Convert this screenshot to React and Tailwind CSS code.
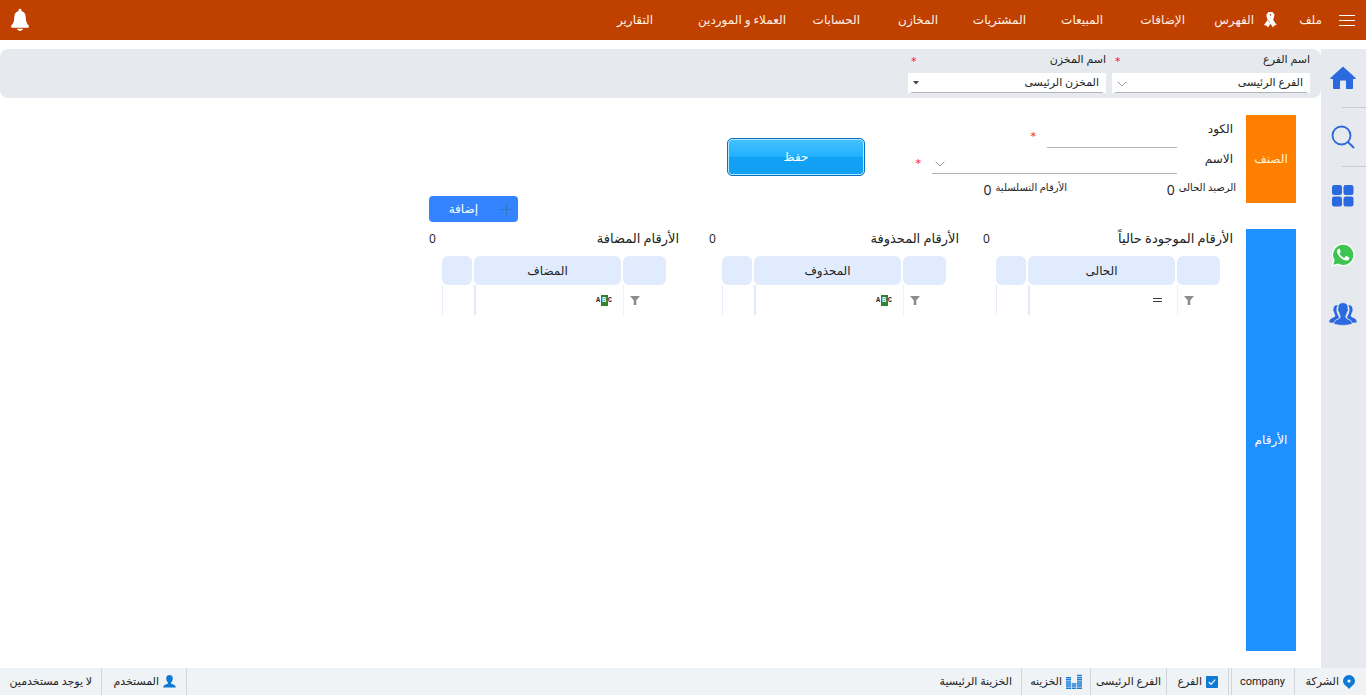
import React from "react";

const MENU = [
  { text: "الفهرس", width: "w-[69px]" },
  { text: "الإضافات", width: "w-[82px]" },
  { text: "المبيعات", width: "w-[77px]" },
  { text: "المشتريات", width: "w-[88px]" },
  { text: "المخازن", width: "w-[78px]" },
  { text: "الحسابات", width: "w-[74px]" },
  { text: "العملاء و الموردين", width: "w-[133px]" },
  { text: "التقارير", width: "w-[60px]" },
];

function BellIcon() {
  return (
    <svg viewBox="0 0 20 24" className="h-6 w-5" fill="#fff" aria-hidden="true">
      <circle cx="10" cy="2.200" r="1.400" />
      <path d="M10 3c-3.800 0-5.500 2.600-5.700 6-.3 4.600-.8 6.300-3.100 8.600v1.200c0 .6.400.9 1 1h15.600c.6-.1 1-.4 1-1v-1.200c-2.300-2.300-2.800-4-3.100-8.600C15.500 5.600 13.800 3 10 3z" />
      <path d="M7 20.800h6c-.5 1.400-1.500 2-3 2s-2.500-.6-3-2z" />
    </svg>
  );
}

function RibbonIcon() {
  return (
    <svg viewBox="0 0 14 16" className="h-4 w-[14px]" aria-hidden="true">
      <path d="M3.500 2.500L5.500 0h4l2 2.500-1 4.500L5 15.500 3.700 13.800 1 13l5.300-7.500z" fill="#fff" />
      <path d="M3.500 2.500c-.2 2 .5 4 1.500 5.500l5 7.500 1.200-2 2.500-.5L8.500 5.500z" fill="#fff" />
      <path d="M6.400 2.800L7.300 2 8.200 2.800 7.400 4z" fill="#c04000" />
      <path d="M5.300 8.500l1.500 2.200" stroke="#c04000" strokeWidth=".6" />
    </svg>
  );
}

function HomeIcon() {
  return (
    <svg viewBox="0 0 26 24" className="h-6 w-[26px]" fill="#2a69de" aria-hidden="true">
      <path d="M13 .5L.6 11.800c-.6.600-.3 1.300.5 1.300H3V22c0 .6.400 1 1 1h6v-7.500c0-.7.400-1.100 1.100-1.100h3.800c.7 0 1.100.4 1.100 1.100V23h6c.6 0 1-.4 1-1v-8.900h1.900c.8 0 1.100-.7.500-1.300z" />
    </svg>
  );
}

function SearchIcon() {
  return (
    <svg viewBox="0 0 24 24" className="size-6" fill="none" stroke="#2f6bd8" strokeWidth="1.900" aria-hidden="true">
      <circle cx="10.500" cy="10.500" r="9" />
      <path d="M17 17l6 6" />
    </svg>
  );
}

function GridIcon() {
  return (
    <svg viewBox="0 0 22 22" className="size-[22px]" fill="#2a69de" aria-hidden="true">
      <rect x="0" y="0" width="10" height="10" rx="2.200" />
      <rect x="11.500" y="0" width="10" height="10" rx="2.200" />
      <rect x="0" y="11.500" width="10" height="10" rx="2.200" />
      <rect x="11.500" y="11.500" width="10" height="10" rx="2.200" />
    </svg>
  );
}

function ChatIcon() {
  return (
    <svg viewBox="0 0 24 24" className="size-6" aria-hidden="true">
      <path d="M12.200.3a11.300 11.300 0 0 0-10 16.700L.4 23.700l6.800-1.800A11.400 11.400 0 1 0 12.200.3z" fill="#fff" />
      <path d="M12.200 1.700a10.100 10.100 0 0 0-8.600 15.400L2.400 21.700l4.700-1.200A10.100 10.100 0 1 0 12.200 1.700z" fill="#3fc351" />
      <path d="M8.900 6.300c-.3-.5-.6-.5-.9-.5-.8 0-2 1-2 2.800 0 1.800 1.300 3.500 2.400 4.800 1.400 1.700 3.300 3.200 5.600 3.900 2 .6 3.900-.1 4.200-1.600.2-.9.100-1.200-.2-1.400l-2.500-1.200c-.4-.2-.6-.1-.9.300l-1 1.200c-.3.3-.5.300-.9.100-1.800-.8-3.100-2-4-3.600-.2-.4-.1-.6.100-.9l.7-.9c.2-.3.200-.5.100-.8z" fill="#fff" />
    </svg>
  );
}

function PeopleIcon() {
  return (
    <svg viewBox="0 0 28 24" className="h-6 w-7" fill="#2a69de" aria-hidden="true">
      <path d="M8.200 3.200C5.500 3 4.300 5 4.500 7.500c-.6.700 0 2 .6 2.600.2 1.800.9 2.600 1.100 3.500.2 1.300-1.200 1.800-3 2.500C1.200 17 .4 18.200.2 20.200c1.500.4 3 .5 4.600.5.500-2.500 3.200-3.300 4.700-4.200.7-.5.500-1.600 0-2.400C8.300 12 7.300 9.500 7.500 7c.1-1.500.5-2.800 1.400-3.700z" />
      <path d="M19.800 3.200c2.700-.2 3.900 1.800 3.700 4.300.6.700 0 2-.6 2.600-.2 1.800-.9 2.600-1.100 3.500-.2 1.300 1.200 1.800 3 2.500 2 .9 2.800 2.100 3 4.100-1.500.4-3 .5-4.600.5-.5-2.500-3.200-3.300-4.700-4.200-.7-.5-.5-1.600 0-2.400 1.200-2.100 2.200-4.600 2-7.100-.1-1.500-.5-2.800-1.400-3.700z" />
      <path d="M14 .7c-3.700 0-5.300 2.600-4.900 6-.8.500-.3 2.400.6 3.200.4 2 1.200 3 1.500 4.200.4 2-1.300 2.700-3.300 3.500-1.900.8-2.900 2-3.100 4.500 2.900.9 6 1.300 9.200 1.300s6.300-.4 9.200-1.300c-.2-2.500-1.200-3.700-3.100-4.500-2-.8-3.700-1.500-3.300-3.500.3-1.200 1.100-2.200 1.500-4.200.9-.8 1.400-2.700.6-3.200.4-3.400-1.200-6-4.900-6z" stroke="#e6eaef" strokeWidth=".7" />
    </svg>
  );
}

function ChevronIcon() {
  return (
    <svg viewBox="0 0 10 6" className="h-1.5 w-2.5" fill="none" stroke="#999" aria-hidden="true">
      <path d="M.7.700L5 5 9.300.700" />
    </svg>
  );
}

function CaretIcon() {
  return (
    <svg viewBox="0 0 6 4" className="h-1 w-1.5" fill="#444" aria-hidden="true">
      <path d="M0 0h6L3 3.500z" />
    </svg>
  );
}

function FunnelIcon() {
  return (
    <svg viewBox="0 0 10 9" className="h-[9px] w-2.5" fill="#8c8c8c" aria-hidden="true">
      <path d="M0 0h10L6.300 4.200V9H3.700V4.200z" />
    </svg>
  );
}

function EqualsIcon() {
  return (
    <svg viewBox="0 0 10 6" className="h-1.5 w-2.5" aria-hidden="true">
      <path d="M0 1.500h9M0 4.500h9" stroke="#3b3b3b" />
    </svg>
  );
}

function ContainsIcon() {
  return (
    <span dir="ltr" className="flex h-[11px] w-4 items-center justify-between font-['Liberation_Mono',monospace] text-[7px] font-bold leading-none text-gray-800">
      <span>A</span>
      <span className="flex h-[11px] w-[7px] items-center justify-center bg-[#2f8132] text-white">B</span>
      <span>C</span>
    </span>
  );
}

function PinIcon() {
  return (
    <svg viewBox="0 0 12 14" className="h-3.5 w-3" aria-hidden="true">
      <path d="M6 0a6 6 0 0 0-6 6c0 2.700 2 4.400 3.700 5.600L6 14l2.300-2.400C10 10.400 12 8.700 12 6a6 6 0 0 0-6-6z" fill="#0f7ad4" />
      <circle cx="6" cy="6" r="1.600" fill="#fff" />
    </svg>
  );
}

function CheckIcon() {
  return (
    <svg viewBox="0 0 12 12" className="size-3" aria-hidden="true">
      <rect width="12" height="12" rx="1" fill="#0f7ad4" />
      <path d="M2.800 6l2.200 2.300 4.200-4.600" fill="none" stroke="#fff" strokeWidth="1.200" />
    </svg>
  );
}

function CoinsIcon() {
  return (
    <svg viewBox="0 0 16 15" className="h-[15px] w-4" stroke="#1b7fd6" strokeWidth="1.500" aria-hidden="true">
      <path d="M0 3.700h5M0 5.800h5M0 7.900h5M0 10h5M0 12.100h5M0 14.200h5M5.700 10h4.600M5.700 12.100h4.600M5.700 14.200h4.600M11 1.600h5M11 3.700h5M11 5.800h5M11 7.900h5M11 10h5M11 12.100h5M11 14.200h5" />
    </svg>
  );
}

function PersonIcon() {
  return (
    <svg viewBox="0 0 13 13" className="size-[13px]" fill="#0f7ad4" aria-hidden="true">
      <path d="M6.500 0C4.300 0 3.100 1.400 3.200 3.500c.1 2 .9 3.400 1.800 4.100v1C4.200 9.600.5 9.300.1 12.600h12.800C12.500 9.300 8.800 9.600 8 8.600v-1c.9-.7 1.700-2.100 1.800-4.100C9.900 1.400 8.700 0 6.500 0z" />
    </svg>
  );
}

function Star() {
  return <span className="font-['DejaVu_Sans',sans-serif] text-[11px] leading-5 text-[#ff1010]" aria-hidden="true">*</span>;
}

function FilterSelect({ id, label, value, icon }) {
  return (
    <div className="w-[198px]">
      <div className="flex h-5 items-center justify-between pl-[3px]">
        <label htmlFor={id}>{label}</label>
        <span className="pt-1"><Star /></span>
      </div>
      <div className="relative mt-[3px] bg-white px-[3px]">
        <select id={id} className="h-5 w-full appearance-none border-b border-[#b4b4b4] bg-transparent pr-1 outline-none">
          <option>{value}</option>
        </select>
        <span className="pointer-events-none absolute left-[5px] top-2">{icon}</span>
      </div>
    </div>
  );
}

function NumbersPanel({ title, column, operator, className }) {
  return (
    <section className={"w-[250px] " + className}>
      <div className="flex h-5 items-center justify-between">
        <h2 className="text-[13px]">{title}</h2>
        <span className="font-['Open_Sans',sans-serif] text-[12px]">0</span>
      </div>
      <table className="mr-[11px] mt-[7px] w-[228px] table-fixed border-separate border-spacing-x-[2px] border-spacing-y-0">
        <thead>
          <tr className="h-[29px]">
            <th className="w-[43px] rounded-md bg-[#e0ebfd]" aria-label="تصفية" />
            <th className="rounded-md bg-[#e0ebfd] text-[12px] font-normal">{column}</th>
            <th className="w-[30px] rounded-md bg-[#e0ebfd]" aria-label="إجراء" />
          </tr>
        </thead>
        <tbody>
          <tr className="h-[30px]">
            <td className="border-l border-[#eef1f7] pr-[26px]">
              <button type="button" className="block" aria-label="تصفية"><FunnelIcon /></button>
            </td>
            <td className="border-l-2 border-[#dfe9fb] px-[9px]">
              <div className="flex items-center gap-1">
                <button type="button" className="flex w-4 justify-center" aria-label="نوع المقارنة">{operator}</button>
                <input type="text" aria-label={column} className="w-0 grow bg-transparent outline-none" />
              </div>
            </td>
            <td className="border-l border-[#e6edf8]" />
          </tr>
        </tbody>
      </table>
    </section>
  );
}

function SideButton({ label, divider, children }) {
  return (
    <div className="h-[59px]">
      <button type="button" aria-label={label} className="flex h-[58px] w-full items-center justify-center pr-0.5">
        {children}
      </button>
      {divider && <hr className="w-6 border-[#c9cdd3]" />}
    </div>
  );
}

export default function App() {
  return (
    <div dir="rtl" className="flex min-h-screen flex-col bg-white font-['Roboto','DejaVu_Sans',sans-serif] text-[11px] leading-4 text-[#222]">
      <header className="flex h-10 items-center bg-[#c04000] pl-2.5 pr-[11px] text-[12px] text-[#fff1e6]">
        <button type="button" aria-label="القائمة" className="flex w-4 flex-col gap-1">
          <span className="h-px bg-white" />
          <span className="h-px bg-white" />
          <span className="h-px bg-white" />
        </button>
        <nav className="flex grow items-center pr-[17px]">
          <button type="button" className="w-[45px] text-right">ملف</button>
          <span className="w-[23px]"><RibbonIcon /></span>
          {MENU.map((item) => (
            <button key={item.text} type="button" className={"whitespace-nowrap text-right " + item.width}>
              {item.text}
            </button>
          ))}
        </nav>
        <button type="button" aria-label="الإشعارات"><BellIcon /></button>
      </header>

      <div className="mt-[9px] flex grow">
        <aside className="w-[45px] shrink-0 bg-[#e6eaef]">
          <SideButton label="الرئيسية" divider><HomeIcon /></SideButton>
          <SideButton label="بحث" divider><SearchIcon /></SideButton>
          <SideButton label="التطبيقات"><GridIcon /></SideButton>
          <SideButton label="واتساب"><ChatIcon /></SideButton>
          <SideButton label="المستخدمون"><PeopleIcon /></SideButton>
        </aside>

        <main className="flex grow flex-col">
          <div className="flex h-[49px] gap-1.5 rounded-lg bg-[#e6eaef] pr-[11px] pt-px">
            <FilterSelect id="branch" label="اسم الفرع" value="الفرع الرئيسى" icon={<ChevronIcon />} />
            <FilterSelect id="store" label="اسم المخزن" value="المخزن الرئيسى" icon={<CaretIcon />} />
          </div>

          <section className="mt-[17px] flex h-[107px] pr-[25px]">
            <h2 className="flex h-[88px] w-[50px] shrink-0 items-center justify-center bg-[#ff8000] text-[12px] text-[#fff3cf]">الصنف</h2>
            <div className="mr-[10px] w-[325px] shrink-0">
              <div className="flex h-[33px] items-start pr-[3px]">
                <label htmlFor="code" className="w-14 pt-1.5 text-[12px]">الكود</label>
                <input id="code" type="text" className="h-[33px] w-[130px] border-b border-[#b4b4b4] bg-transparent outline-none" />
                <span className="mr-[11px] mt-3"><Star /></span>
              </div>
              <div className="flex h-[26px] items-start pr-[3px]">
                <label htmlFor="name" className="w-14 pt-[3px] text-[12px]">الاسم</label>
                <div className="relative w-[245px]">
                  <select id="name" className="h-[26px] w-full appearance-none border-b border-[#b4b4b4] bg-transparent outline-none">
                    <option></option>
                  </select>
                  <span className="pointer-events-none absolute left-[3px] top-[13px]"><ChevronIcon /></span>
                </div>
                <span className="mr-[11px] mt-1.5"><Star /></span>
              </div>
              <div className="flex h-7 items-center text-[10px]">
                <div className="flex w-[169px] items-center gap-1">
                  <span className="whitespace-nowrap">الرصيد الحالى</span>
                  <span className="pt-1 font-['Open_Sans',sans-serif] text-[14px]">0</span>
                </div>
                <span className="whitespace-nowrap">الأرقام التسلسلية</span>
                <span className="mr-1 pt-1 font-['Open_Sans',sans-serif] text-[14px]">0</span>
              </div>
            </div>
            <button
              type="button"
              className="mr-[46px] mt-[23px] h-[38px] w-[138px] shrink-0 rounded-[5px] border border-[#0b6fc0] bg-linear-to-b from-[#45c2ff] via-[#1eb0ff] via-50% to-[#12a0f4] to-50% text-[12px] text-white shadow-[inset_0_0_0_1px_#b5eaff]"
            >
              حفظ
            </button>
            <button type="button" className="mr-[209px] flex h-[26px] w-[89px] shrink-0 items-center self-end rounded bg-[#3484ff] pr-[5px] text-[12px] text-white">
              <svg viewBox="0 0 13 13" className="size-[13px]" stroke="#3276c8" aria-hidden="true">
                <path d="M6.500 0v13M0 6.500h13" />
              </svg>
              <span className="mr-[22px]">إضافة</span>
            </button>
          </section>

          <section className="mb-[17px] mt-[7px] flex grow pr-[25px]">
            <h2 className="flex w-[50px] shrink-0 items-center justify-center bg-[#1e90ff] text-[12px] text-white">الأرقام</h2>
            <NumbersPanel title="الأرقام الموجودة حالياً" column="الحالى" operator={<EqualsIcon />} className="mr-[13px]" />
            <NumbersPanel title="الأرقام المحذوفة" column="المحذوف" operator={<ContainsIcon />} className="mr-6" />
            <NumbersPanel title="الأرقام المضافة" column="المضاف" operator={<ContainsIcon />} className="mr-[30px]" />
          </section>
        </main>
      </div>

      <footer className="flex h-[27px] items-stretch whitespace-nowrap bg-[#eff3f6] *:flex *:items-center *:gap-1 *:border-gray-300">
        <div className="w-[72px] border-l pr-[11px]"><PinIcon />الشركة</div>
        <div className="w-[63px] border-l pr-[9px]">company</div>
        <div className="mr-0.5 w-[63px] border-l border-r pr-[10px]"><CheckIcon />الفرع</div>
        <div className="w-[76px] justify-center border-l">الفرع الرئيسى</div>
        <div className="w-[69px] border-l pr-[8px]"><CoinsIcon />الخزينه</div>
        <div className="grow pr-[9px]">الخزينة الرئيسية</div>
        <div className="w-[86px] border-l border-r pr-[10px]"><PersonIcon />المستخدم</div>
        <div className="w-[101px] pr-[9px]">لا يوجد مستخدمين</div>
      </footer>
    </div>
  );
}
